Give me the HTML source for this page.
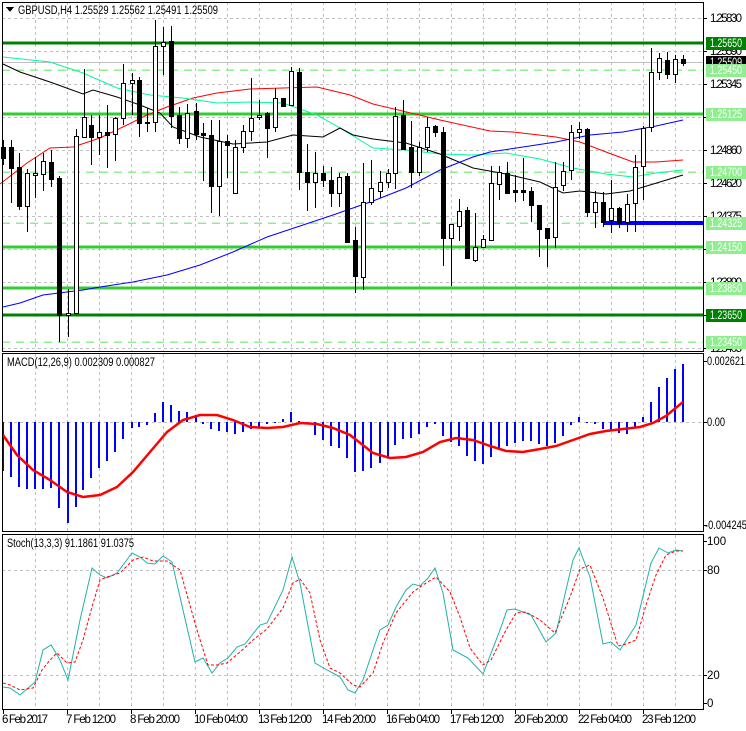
<!DOCTYPE html>
<html><head><meta charset="utf-8"><style>
html,body{margin:0;padding:0;background:#fff;width:746px;height:731px;overflow:hidden}
svg{display:block}
text{font-family:"Liberation Sans",sans-serif;font-size:11.5px;fill:#000}
</style></head><body>
<svg width="746" height="731" viewBox="0 0 746 731" xmlns="http://www.w3.org/2000/svg" shape-rendering="crispEdges">
<g stroke="#c0c0c0" stroke-dasharray="3,3" stroke-width="1">
<path d="M2 18.5H703M2 51.5H703M2 84.5H703M2 117.5H703M2 150.5H703M2 183.5H703M2 216.5H703M2 249.5H703M2 282.5H703M2 315.5H703M2 348.5H703"/>
<path d="M35.5 2V352M67.5 2V352M99.5 2V352M131.5 2V352M163.5 2V352M195.5 2V352M227.5 2V352M259.5 2V352M291.5 2V352M323.5 2V352M355.5 2V352M387.5 2V352M419.5 2V352M451.5 2V352M483.5 2V352M515.5 2V352M547.5 2V352M579.5 2V352M611.5 2V352M643.5 2V352M675.5 2V352"/>
<path d="M35.5 354V532M67.5 354V532M99.5 354V532M131.5 354V532M163.5 354V532M195.5 354V532M227.5 354V532M259.5 354V532M291.5 354V532M323.5 354V532M355.5 354V532M387.5 354V532M419.5 354V532M451.5 354V532M483.5 354V532M515.5 354V532M547.5 354V532M579.5 354V532M611.5 354V532M643.5 354V532M675.5 354V532"/>
<path d="M2 422.5H703"/>
<path d="M35.5 535V709M67.5 535V709M99.5 535V709M131.5 535V709M163.5 535V709M195.5 535V709M227.5 535V709M259.5 535V709M291.5 535V709M323.5 535V709M355.5 535V709M387.5 535V709M419.5 535V709M451.5 535V709M483.5 535V709M515.5 535V709M547.5 535V709M579.5 535V709M611.5 535V709M643.5 535V709M675.5 535V709"/>
<path d="M2 570.5H703M2 675.5H703"/>
</g>
<g stroke="#90ee90" stroke-dasharray="8,6" stroke-width="1.5">
<path d="M2 70H703M2 172H703M2 223H703M2 342H703"/>
</g>
<path d="M2 62.5H703" stroke="#c0c0c0"/>
<g stroke="#32cd32" stroke-width="3"><path d="M2 114H703M2 247H703M2 288H703"/></g>
<g stroke="#008000" stroke-width="3"><path d="M2 43H703M2 315H703"/></g>
<path d="M603 223H703" stroke="#0000ff" stroke-width="4"/>
<g fill="none" stroke-width="1" shape-rendering="auto">
<polyline stroke="#ff0000" points="0,184 27,163 50,148 73,147 100,138 127,125 147,115 167,107 193,98 217,93 250,89 283,88 317,87 350,95 373,104 440,120 490,131 513,132 556,137 580,142 606,152 633,162 656,162 683,160"/>
<polyline stroke="#00fa9a" points="3,57 50,62 83,73 117,88 150,95 183,98 217,103 250,102 283,103 317,115 340,128 373,148 406,150 440,154 473,155 506,153 540,159 573,168 606,174 633,177 656,173 683,170"/>
<polyline stroke="#000" points="3,64 20,72 50,82 83,94 93,90 117,97 140,105 160,113 173,127 200,137 233,144 267,142 293,135 323,137 340,128 353,135 373,139 406,143 440,154 473,168 506,174 540,182 563,193 580,191 606,194 630,191 650,185 683,175"/>
<polyline stroke="#0000ff" points="3,307 20,303 43,295 83,290 100,287 133,282 167,275 200,265 233,252 267,237 300,226 333,215 373,201 406,188 440,170 473,157 490,152 523,147 556,142 590,135 623,132 656,126 683,120"/>
</g>
<g stroke="#000" stroke-width="1">
<path d="M3.5 140V165M11.5 140V203M19.5 153V210M27.5 169V232M35.5 157V198M43.5 153V191M51.5 150V187M59.5 176V342M68.5 289V337M76.5 129V313M84.5 69V137M91.5 115V165M99.5 115V155M107.5 105V168M115.5 117V161M123.5 64V125M132.5 73V115M139.5 77V137M147.5 108V132M155.5 20V132M163.5 27V75M171.5 26V128M179.5 107V144M187.5 104V148M196.5 103V140M203.5 123V181M211.5 120V213M219.5 120V216M227.5 135V178M235.5 140V193M243.5 125V153M251.5 78V141M259.5 100V120M267.5 112V158M275.5 88V132M283.5 98V106M291.5 67V105M299.5 68V190M307.5 144V211M315.5 152V208M323.5 166V187M331.5 167V207M339.5 173V207M347.5 173V243M355.5 227V293M363.5 163V290M371.5 160V205M380.5 171V198M388.5 169V188M395.5 107V189M403.5 100V149M411.5 121V188M419.5 142V176M427.5 117V152M435.5 125V137M443.5 127V266M451.5 224V286M459.5 199V241M467.5 207V259M475.5 213V262M483.5 235V248M491.5 166V240M499.5 166V200M507.5 162V193M515.5 175V202M523.5 158V201M531.5 187V222M539.5 205V257M547.5 228V267M555.5 162V248M563.5 162V191M571.5 125V180M579.5 122V139M587.5 128V217M595.5 191V228M603.5 192V227M611.5 180V233M619.5 207V228M627.5 194V232M635.5 155V232M643.5 126V200M651.5 48V132M659.5 53V80M667.5 52V79M675.5 55V83M683.5 55V66"/>
</g>
<g stroke="#000" stroke-width="1">
<g fill="#000">
<rect x="1.5" y="147.5" width="4" height="11"/><rect x="9.5" y="147.5" width="4" height="21"/><rect x="17.5" y="167.5" width="4" height="39"/><rect x="49.5" y="162.5" width="4" height="17"/><rect x="57.5" y="178.5" width="4" height="137"/><rect x="89.5" y="125.5" width="4" height="12"/><rect x="105.5" y="132.5" width="4" height="3"/><rect x="137.5" y="80.5" width="4" height="43"/><rect x="145.5" y="122.5" width="4" height="1"/><rect x="169.5" y="41.5" width="4" height="75"/><rect x="177.5" y="115.5" width="4" height="23"/><rect x="194.5" y="111.5" width="4" height="23"/><rect x="201.5" y="133.5" width="4" height="2"/><rect x="209.5" y="135.5" width="4" height="51"/><rect x="225.5" y="141.5" width="4" height="4"/><rect x="265.5" y="113.5" width="4" height="15"/><rect x="281.5" y="98.5" width="4" height="8"/><rect x="297.5" y="72.5" width="4" height="100"/><rect x="305.5" y="172.5" width="4" height="10"/><rect x="321.5" y="173.5" width="4" height="7"/><rect x="329.5" y="180.5" width="4" height="13"/><rect x="345.5" y="176.5" width="4" height="66"/><rect x="353.5" y="240.5" width="4" height="36"/><rect x="401.5" y="115.5" width="4" height="34"/><rect x="409.5" y="147.5" width="4" height="25"/><rect x="433.5" y="126.5" width="4" height="6"/><rect x="441.5" y="132.5" width="4" height="106"/><rect x="465.5" y="210.5" width="4" height="48"/><rect x="505.5" y="173.5" width="4" height="20"/><rect x="513.5" y="190.5" width="4" height="2"/><rect x="521.5" y="190.5" width="4" height="2"/><rect x="529.5" y="191.5" width="4" height="14"/><rect x="537.5" y="205.5" width="4" height="24"/><rect x="545.5" y="228.5" width="4" height="10"/><rect x="585.5" y="129.5" width="4" height="83"/><rect x="601.5" y="202.5" width="4" height="20"/><rect x="617.5" y="208.5" width="4" height="15"/><rect x="665.5" y="60.5" width="4" height="14"/><rect x="681.5" y="59.5" width="4" height="4"/>
</g>
<g fill="#fff">
<rect x="25.5" y="173.5" width="4" height="33"/><rect x="33.5" y="173.5" width="4" height="2"/><rect x="41.5" y="161.5" width="4" height="13"/><rect x="66.5" y="313.5" width="4" height="2"/><rect x="74.5" y="136.5" width="4" height="177"/><rect x="82.5" y="117.5" width="4" height="20"/><rect x="97.5" y="132.5" width="4" height="5"/><rect x="113.5" y="118.5" width="4" height="16"/><rect x="121.5" y="83.5" width="4" height="35"/><rect x="130.5" y="80.5" width="4" height="3"/><rect x="153.5" y="46.5" width="4" height="76"/><rect x="161.5" y="42.5" width="4" height="4"/><rect x="185.5" y="113.5" width="4" height="25"/><rect x="217.5" y="141.5" width="4" height="45"/><rect x="233.5" y="147.5" width="4" height="46"/><rect x="241.5" y="131.5" width="4" height="16"/><rect x="249.5" y="118.5" width="4" height="13"/><rect x="257.5" y="115.5" width="4" height="2"/><rect x="273.5" y="98.5" width="4" height="29"/><rect x="289.5" y="71.5" width="4" height="34"/><rect x="313.5" y="173.5" width="4" height="9"/><rect x="337.5" y="177.5" width="4" height="16"/><rect x="361.5" y="202.5" width="4" height="75"/><rect x="369.5" y="188.5" width="4" height="14"/><rect x="378.5" y="182.5" width="4" height="9"/><rect x="386.5" y="173.5" width="4" height="9"/><rect x="393.5" y="116.5" width="4" height="57"/><rect x="417.5" y="147.5" width="4" height="25"/><rect x="425.5" y="127.5" width="4" height="20"/><rect x="449.5" y="224.5" width="4" height="14"/><rect x="457.5" y="211.5" width="4" height="15"/><rect x="473.5" y="247.5" width="4" height="13"/><rect x="481.5" y="239.5" width="4" height="8"/><rect x="489.5" y="183.5" width="4" height="57"/><rect x="497.5" y="172.5" width="4" height="12"/><rect x="553.5" y="187.5" width="4" height="50"/><rect x="561.5" y="171.5" width="4" height="14"/><rect x="569.5" y="132.5" width="4" height="38"/><rect x="577.5" y="129.5" width="4" height="3"/><rect x="593.5" y="202.5" width="4" height="10"/><rect x="609.5" y="208.5" width="4" height="12"/><rect x="625.5" y="204.5" width="4" height="18"/><rect x="633.5" y="167.5" width="4" height="36"/><rect x="641.5" y="128.5" width="4" height="38"/><rect x="649.5" y="72.5" width="4" height="55"/><rect x="657.5" y="58.5" width="4" height="14"/><rect x="673.5" y="59.5" width="4" height="15"/>
</g>
</g>
<g stroke="#0000ff" stroke-width="2">
<path d="M3 422V471M11 422V477M19 422V487M27 422V489M35 422V489M43 422V489M51 422V488M59 422V508M68 422V523M76 422V507M83 422V490M91 422V478M99 422V468M107 422V461M115 422V452M123 422V439M132 422V428M139 422V427M147 422V425M155 422V413M163 422V402M171 422V405M179 422V411M187 422V412M196 422V417M203 422V424M211 422V429M219 422V431M227 422V432M235 422V434M243 422V432M251 422V429M259 422V428M267 422V424M275 422V423M283 422V419M291 422V412M299 422V421M307 422V423M315 422V435M323 422V440M331 422V446M339 422V448M347 422V458M355 422V472M363 422V471M371 422V468M380 422V463M388 422V458M395 422V445M403 422V439M411 422V438M419 422V434M427 422V427M435 422V424M443 422V436M451 422V442M459 422V446M467 422V456M475 422V461M483 422V464M491 422V457M499 422V448M507 422V446M515 422V443M523 422V441M531 422V441M539 422V444M547 422V446M555 422V443M563 422V436M571 422V425M579 422V417M587 422V423M595 422V424M603 422V429M611 422V430M619 422V433M627 422V434M635 422V427M643 422V417M651 422V402M659 422V387M667 422V378M675 422V369M683 422V364"/>
</g>
<polyline fill="none" stroke="#ff0000" stroke-width="2.5" shape-rendering="auto" points="3,435 17,455 33,470 50,480 67,492 83,497 100,495 117,487 133,472 150,452 167,432 183,420 200,415 217,415 233,420 250,427 267,428 283,427 300,423 317,424 333,428 350,435 373,453 390,458 406,457 423,452 440,442 456,438 473,440 490,446 506,451 523,452 540,449 556,446 573,440 590,434 606,431 623,429 640,427 653,423 666,416 683,402"/>
<g fill="none" shape-rendering="auto">
<polyline stroke="#20b2aa" stroke-width="1" points="3,687 10,688 20,695 35,682 43,650 51,645 60,660 68,680 80,620 92,568 100,575 107,578 117,573 132,553 140,557 147,563 155,564 163,556 172,562 180,597 195,662 203,658 212,673 220,663 228,658 237,647 245,644 260,625 267,623 283,590 292,557 300,583 315,663 327,670 340,677 348,690 355,693 363,680 373,650 380,630 388,625 396,607 406,590 413,584 420,586 428,578 435,568 443,593 453,650 468,658 483,674 500,630 507,610 515,609 531,615 546,642 556,633 573,560 579,548 590,577 603,644 611,642 620,650 636,625 651,563 659,548 668,553 676,550 683,551"/>
<polyline stroke="#ff0000" stroke-width="1" stroke-dasharray="3,2" points="3,683 10,685 20,690 33,688 42,670 50,660 57,653 67,663 75,662 83,640 92,607 100,580 107,577 120,573 133,560 143,557 153,561 167,561 180,570 197,630 208,665 217,665 227,663 240,652 253,640 267,629 283,608 293,583 300,579 310,593 320,640 330,668 340,673 353,685 360,687 373,673 383,643 396,613 413,592 426,583 436,577 450,592 460,617 470,648 483,665 491,660 506,630 516,613 526,612 540,620 555,633 570,597 580,569 590,565 603,598 618,646 626,644 636,640 646,605 656,575 666,555 676,551 683,551"/>
</g>
<g fill="none" stroke="#000" stroke-width="1">
<rect x="2.5" y="2.5" width="701" height="349"/>
<rect x="2.5" y="353.5" width="701" height="178"/>
<rect x="2.5" y="534.5" width="701" height="175"/>
</g>
<g stroke="#000"><path d="M703 18.5h4M703 51.5h4M703 84.5h4M703 117.5h4M703 150.5h4M703 183.5h4M703 216.5h4M703 249.5h4M703 282.5h4M703 315.5h4M703 348.5h4M703 361.5h4M703 422.5h4M703 525.5h4M703 541.5h4M703 570.5h4M703 675.5h4M703 703.5h4"/>
<path d="M3.5 709v5M67.5 709v5M131.5 709v5M195.5 709v5M259.5 709v5M323.5 709v5M387.5 709v5M451.5 709v5M515.5 709v5M579.5 709v5M643.5 709v5"/></g>
<g lengthAdjust="spacingAndGlyphs">
<text x="710" y="22" textLength="32">1.25830</text>
<text x="710" y="55" textLength="32">1.25590</text>
<text x="710" y="88" textLength="32">1.25345</text>
<text x="710" y="121" textLength="32">1.25105</text>
<text x="710" y="154" textLength="32">1.24860</text>
<text x="710" y="187" textLength="32">1.24620</text>
<text x="710" y="220" textLength="32">1.24375</text>
<text x="710" y="253" textLength="32">1.24135</text>
<text x="710" y="286" textLength="32">1.23890</text>
<text x="710" y="352" textLength="32">1.23405</text>
</g>
<rect x="706" y="37" width="40" height="13" fill="#008000"/><text x="710" y="47" textLength="32" lengthAdjust="spacingAndGlyphs" style="fill:#fff">1.25650</text>
<rect x="706" y="56" width="40" height="12" fill="#000"/><text x="710" y="66" textLength="32" lengthAdjust="spacingAndGlyphs" style="fill:#fff">1.25509</text>
<rect x="706" y="64" width="40" height="13" fill="#90ee90"/><text x="710" y="74" textLength="32" lengthAdjust="spacingAndGlyphs" style="fill:#fff">1.25450</text>
<rect x="706" y="108" width="40" height="13" fill="#90ee90"/><text x="710" y="118" textLength="32" lengthAdjust="spacingAndGlyphs" style="fill:#fff">1.25125</text>
<rect x="706" y="166" width="40" height="13" fill="#90ee90"/><text x="710" y="176" textLength="32" lengthAdjust="spacingAndGlyphs" style="fill:#fff">1.24700</text>
<rect x="706" y="217" width="40" height="13" fill="#90ee90"/><text x="710" y="227" textLength="32" lengthAdjust="spacingAndGlyphs" style="fill:#fff">1.24325</text>
<rect x="706" y="241" width="40" height="13" fill="#90ee90"/><text x="710" y="251" textLength="32" lengthAdjust="spacingAndGlyphs" style="fill:#fff">1.24150</text>
<rect x="706" y="282" width="40" height="13" fill="#90ee90"/><text x="710" y="292" textLength="32" lengthAdjust="spacingAndGlyphs" style="fill:#fff">1.23850</text>
<rect x="706" y="309" width="40" height="13" fill="#008000"/><text x="710" y="319" textLength="32" lengthAdjust="spacingAndGlyphs" style="fill:#fff">1.23650</text>
<rect x="706" y="336" width="40" height="13" fill="#90ee90"/><text x="710" y="346" textLength="32" lengthAdjust="spacingAndGlyphs" style="fill:#fff">1.23450</text>
<text x="707" y="365" textLength="38" lengthAdjust="spacingAndGlyphs">0.002621</text>
<text x="707" y="426" textLength="18" lengthAdjust="spacingAndGlyphs">0.00</text>
<text x="705" y="529" textLength="42" lengthAdjust="spacingAndGlyphs">-0.004245</text>
<text x="707" y="545">100</text>
<text x="707" y="574">80</text>
<text x="707" y="679">20</text>
<text x="707" y="707">0</text>
<path d="M6 7h8l-4 5z" fill="#000"/>
<text x="18" y="14" textLength="200" lengthAdjust="spacingAndGlyphs">GBPUSD,H4  1.25529 1.25562 1.25491 1.25509</text>
<text x="7" y="366" textLength="148" lengthAdjust="spacingAndGlyphs">MACD(12,26,9) 0.002309 0.000827</text>
<text x="7" y="547" textLength="127" lengthAdjust="spacingAndGlyphs">Stoch(13,3,3) 91.1861 91.0375</text>
<g lengthAdjust="spacingAndGlyphs">
<text x="2" y="723" textLength="46">6 Feb 2017</text>
<text x="66" y="723" textLength="50">7 Feb 12:00</text>
<text x="130" y="723" textLength="50">8 Feb 20:00</text>
<text x="194" y="723" textLength="54">10 Feb 04:00</text>
<text x="258" y="723" textLength="54">13 Feb 12:00</text>
<text x="322" y="723" textLength="54">14 Feb 20:00</text>
<text x="386" y="723" textLength="54">16 Feb 04:00</text>
<text x="450" y="723" textLength="54">17 Feb 12:00</text>
<text x="514" y="723" textLength="54">20 Feb 20:00</text>
<text x="578" y="723" textLength="54">22 Feb 04:00</text>
<text x="642" y="723" textLength="54">23 Feb 12:00</text>
</g>
</svg>
</body></html>
